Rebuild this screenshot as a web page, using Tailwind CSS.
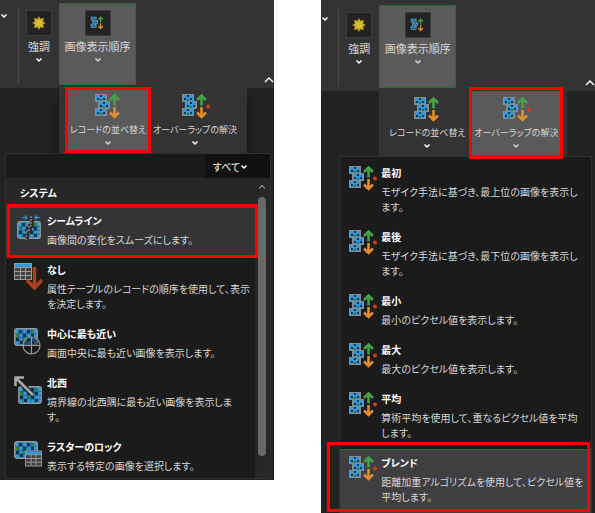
<!DOCTYPE html>
<html lang="ja">
<head>
  <meta charset="UTF-8" />
  <meta name="viewport" content="width=device-width, initial-scale=1" />
  <title>画像表示順序</title>
  <script src="https://cdn.jsdelivr.net/npm/@tailwindcss/browser@4"></script>
</head>
<body class="flex items-start justify-between bg-white font-['Noto_Sans_CJK_JP',sans-serif] text-[10px] text-[#d6d6d6] [font-feature-settings:'palt']">

  <!-- Shared icons -->
  <svg class="hidden">
    <symbol id="chevron" viewBox="0 0 8 6">
      <path d="M1.500 1.500 4 4 6.500 1.500" fill="none" stroke="currentColor" stroke-width="1.500" />
    </symbol>
    <symbol id="collapse" viewBox="0 0 10 8">
      <path d="M1 6 5 2 9 6" fill="none" stroke="currentColor" stroke-width="1.400" />
    </symbol>
    <symbol id="sun" viewBox="0 0 14 14">
      <path d="M7 0 8.300 2.700 11.900 2.100 11.300 5.700 14 7 11.300 8.300 11.900 11.900 8.300 11.300 7 14 5.700 11.300 2.100 11.900 2.700 8.300 0 7 2.700 5.700 2.100 2.100 5.700 2.700Z" fill="#c4a628" />
      <circle cx="7" cy="7" r="3.600" fill="#d6be34" />
    </symbol>
    <symbol id="tile" viewBox="0 0 12 8">
      <rect x=".5" y=".5" width="11" height="7" fill="#3298d8" stroke="#8c8c8c" />
      <path d="M2 4h2v2H2zM5 1h2v2H5zM8 4h2v2H8z" fill="#15324c" />
      <path d="M5 5h2v2H5z" fill="#2e7a35" />
    </symbol>
    <symbol id="order" viewBox="0 0 29 27">
      <use href="#tile" x="1" y="1" width="12" height="8" />
      <use href="#tile" x="4" y="8" width="12" height="8" />
      <use href="#tile" x="1" y="15" width="12" height="8" />
      <path d="M20.500 12.500V2.500M16 7 20.500 2.500 25 7" fill="none" stroke="#46a04a" stroke-width="2.600" />
      <path d="M20.500 14V24M16 19.500 20.500 24 25 19.500" fill="none" stroke="#e08c30" stroke-width="2.600" />
    </symbol>
    <symbol id="overlap" viewBox="0 0 29 27">
      <use href="#order" width="29" height="27" />
      <circle cx="27" cy="13.500" r="2" fill="#c8431c" />
    </symbol>
    <symbol id="raster" viewBox="0 0 24 18">
      <rect x=".7" y=".7" width="22.600" height="16.600" rx="2" fill="#3298d8" stroke="#999" stroke-width="1.200" />
      <path d="M5 2h3v3H5zM13 2h3v3h-3zM17 6h3v3h-3zM9 6h3v3H9zM2 10h3v3H2zM13 10h3v3h-3zM6 13h3v3H6zM17 13h3v3h-3z" fill="#12283c" />
      <path d="M2 6h3v3H2zM9 10h3v3H9zM17 2h3v3h-3z" fill="#32842f" />
      <path d="M5 1v16M9 1v16M13 1v16M17 1v16M1 5.500h22M1 9.500h22M1 13h22" stroke="#174565" stroke-width=".5" />
    </symbol>
    <symbol id="table" viewBox="0 0 18 17">
      <rect x=".5" y=".5" width="17" height="16" fill="#444" stroke="#999" />
      <rect x="1" y="1" width="16" height="3" fill="#3298d8" />
      <path d="M1 4.500h16M1 8.500h16M1 12.500h16M6.500 4v12M11.500 4v12" stroke="#999" />
    </symbol>
    <symbol id="seamline" viewBox="0 0 29 29">
      <use href="#raster" x="3" y="6" width="24" height="18" />
      <path d="M18 5v6h-2v5h-3v8" fill="none" stroke="#2f2f31" stroke-width="4" />
      <path d="M17 1v10h-2v5h-3v10" fill="none" stroke="#aaa" stroke-dasharray="2 1" />
      <path d="M8 2.500h5M11 .5l2 2-2 2M26 2.500h-5M23 .5l-2 2 2 2" fill="none" stroke="#3298d8" stroke-width="1.200" />
    </symbol>
    <symbol id="none" viewBox="0 0 29 29">
      <use href="#table" x="0" y="0" width="18" height="17" />
      <path d="M20.500 4V24M13 17 20.500 25 28 17" fill="none" stroke="#b0401c" stroke-width="3.400" />
    </symbol>
    <symbol id="center" viewBox="0 0 29 29">
      <use href="#raster" x="0" y="1" width="24" height="18" />
      <circle cx="17.500" cy="18.500" r="8.500" fill="#1b1b1b" fill-opacity=".55" stroke="#999" stroke-width="1.200" />
      <path d="M17.500 10v17M9 18.500h17" stroke="#999" stroke-width="1.200" />
    </symbol>
    <symbol id="northwest" viewBox="0 0 29 29">
      <use href="#raster" x="4" y="10" width="24" height="18" />
      <path d="M1.500 1.500 19 19" stroke="#1b1b1b" stroke-width="5" />
      <path d="M2 2 19 19M1.500 10V1.500H10" fill="none" stroke="#a8a8a8" stroke-width="2.600" />
    </symbol>
    <symbol id="lock" viewBox="0 0 29 29">
      <use href="#raster" x="0" y="1" width="24" height="18" />
      <use href="#table" x="11" y="10" width="17" height="17" />
    </symbol>
  </svg>

  <!-- Sort records -->
  <section class="w-[46%] bg-[#222] pb-px">
    <div class="relative flex h-[88px] items-start bg-[#333] pt-[3px]">
      <button aria-label="その他" class="mt-[10px] w-2 text-white"><svg class="h-[6px] w-2"><use href="#chevron" /></svg></button>
      <span class="mt-1 ml-[10px] h-[76px] w-px bg-[#4a4a4a]"></span>
      <button class="flex w-10 flex-col items-center pt-[7px]">
        <span class="flex size-[26px] items-center justify-center border border-[#3c3c3c] bg-[#222]"><svg class="size-[14px]"><use href="#sun" /></svg></span>
        <span class="text-[11px] leading-5">強調</span>
        <svg class="mt-px h-[6px] w-2 text-white"><use href="#chevron" /></svg>
      </button>
      <button class="flex h-[82px] w-[77px] flex-col items-center border border-[#2c6b38] bg-[#5a5a5a] pt-[6px]">
        <span class="flex size-[26px] items-center justify-center border border-[#3c3c3c] bg-[#222]"><svg class="h-[14px] w-[15px]"><use href="#order" /></svg></span>
        <span class="text-[11px] leading-5 whitespace-nowrap">画像表示順序</span>
        <svg class="mt-px h-[6px] w-2"><use href="#chevron" /></svg>
      </button>
      <button aria-label="折りたたむ" class="absolute right-0 bottom-1 text-white"><svg class="h-2 w-[10px]"><use href="#collapse" /></svg></button>
    </div>

    <div class="ml-[59px] flex h-[65px] w-[188px] bg-[#333] pl-[6px] text-[9px] shadow-lg shadow-black/50">
      <button class="relative flex w-[86px] flex-col items-center bg-[#5a5a5a] pt-[5px]">
        <svg class="h-[27px] w-[29px]"><use href="#order" /></svg>
        <span class="leading-5 whitespace-nowrap">レコードの並べ替え</span>
        <svg class="h-[6px] w-2"><use href="#chevron" /></svg>
        <span class="absolute inset-x-0 -top-px bottom-0 border-3 border-[#f00]"></span>
      </button>
      <button class="flex w-[88px] flex-col items-center pt-[5px]">
        <svg class="h-[27px] w-[29px]"><use href="#overlap" /></svg>
        <span class="leading-5 whitespace-nowrap">オーバーラップの解決</span>
        <svg class="h-[6px] w-2 text-white"><use href="#chevron" /></svg>
      </button>
    </div>

    <div class="relative mr-[3px] ml-[5px] border border-[#303030] bg-[#1b1b1b]">
      <div class="flex h-6">
        <input type="text" aria-label="検索" class="min-w-0 flex-1 bg-[#1a1a1a] outline-none" />
        <div class="relative w-[65px] bg-[#111]">
          <select aria-label="フィルター" class="h-6 w-full appearance-none pl-2 text-white outline-none"><option>すべて</option></select>
          <svg class="pointer-events-none absolute top-[10px] left-[35px] h-[6px] w-2 text-white"><use href="#chevron" /></svg>
        </div>
      </div>
      <div class="flex">
        <div class="min-w-0 flex-1">
          <h2 class="bg-[#272727] pt-px pl-[14px] font-bold leading-7 text-white">システム</h2>
          <ul>
            <li class="relative border-y border-[#2f5a3e] bg-[#343436]">
              <button class="flex w-full items-start gap-1 pt-1 pb-2 pl-2 text-left">
                <svg class="mt-[3px] size-[29px] shrink-0"><use href="#seamline" /></svg>
                <span><b class="mb-[2px] block leading-[18px] text-white">シームライン</b><span class="block leading-[15px]">画像間の変化をスムーズにします。</span></span>
              </button>
              <span class="absolute -top-1 -right-[3px] -bottom-[3px] left-px border-3 border-[#f00]"></span>
            </li>
            <li>
              <button class="flex w-full items-start gap-1 pt-[5px] pb-[9px] pl-2 text-left">
                <svg class="mt-[2px] size-[29px] shrink-0"><use href="#none" /></svg>
                <span><b class="mb-[2px] block leading-[18px] text-white">なし</b><span class="block leading-[15px] whitespace-nowrap">属性テーブルのレコードの順序を使用して、表示<br />を決定します。</span></span>
              </button>
            </li>
            <li>
              <button class="flex w-full items-start gap-1 pt-[5px] pb-[9px] pl-2 text-left">
                <svg class="mt-[2px] size-[29px] shrink-0"><use href="#center" /></svg>
                <span><b class="mb-[2px] block leading-[18px] text-white">中心に最も近い</b><span class="block leading-[15px]">画面中央に最も近い画像を表示します。</span></span>
              </button>
            </li>
            <li>
              <button class="flex w-full items-start gap-1 pt-[5px] pb-[9px] pl-2 text-left">
                <svg class="mt-[2px] size-[29px] shrink-0"><use href="#northwest" /></svg>
                <span><b class="mb-[2px] block leading-[18px] text-white">北西</b><span class="block leading-[15px] whitespace-nowrap">境界線の北西隅に最も近い画像を表示しま<br />す。</span></span>
              </button>
            </li>
            <li>
              <button class="flex w-full items-start gap-1 pt-[5px] pb-[5px] pl-2 text-left">
                <svg class="mt-[2px] size-[29px] shrink-0"><use href="#lock" /></svg>
                <span><b class="mb-[2px] block leading-[18px] text-white">ラスターのロック</b><span class="block leading-[15px]">表示する特定の画像を選択します。</span></span>
              </button>
            </li>
          </ul>
        </div>
        <!-- Scroll bar -->
        <div class="flex w-[15px] flex-col items-center bg-[#272727] pt-[6px] pb-[22px]">
          <svg class="h-[6px] w-2 text-[#aaa]"><use href="#collapse" /></svg>
          <span class="mt-[7px] w-2 flex-1 rounded-full bg-[#686868]"></span>
        </div>
      </div>
    </div>
  </section>

  <!-- Resolve overlap -->
  <section class="w-[46%] bg-[#222]">
    <div class="relative flex h-[91px] items-start bg-[#333] pt-[5px]">
      <button aria-label="その他" class="mt-[11px] w-2 text-white"><svg class="h-[6px] w-2"><use href="#chevron" /></svg></button>
      <span class="mt-1 ml-[9px] h-[77px] w-px bg-[#4a4a4a]"></span>
      <button class="flex w-10 flex-col items-center pt-[7px]">
        <span class="flex size-[26px] items-center justify-center border border-[#3c3c3c] bg-[#222]"><svg class="size-[14px]"><use href="#sun" /></svg></span>
        <span class="text-[11px] leading-5">強調</span>
        <svg class="mt-px h-[6px] w-2 text-white"><use href="#chevron" /></svg>
      </button>
      <button class="flex h-[83px] w-[77px] flex-col items-center border border-[#2c6b38] bg-[#5a5a5a] pt-[6px]">
        <span class="flex size-[26px] items-center justify-center border border-[#3c3c3c] bg-[#222]"><svg class="h-[14px] w-[15px]"><use href="#order" /></svg></span>
        <span class="text-[11px] leading-5 whitespace-nowrap">画像表示順序</span>
        <svg class="mt-px h-[6px] w-2"><use href="#chevron" /></svg>
      </button>
      <button aria-label="折りたたむ" class="absolute right-0 bottom-1 text-white"><svg class="h-2 w-[10px]"><use href="#collapse" /></svg></button>
    </div>

    <div class="relative z-10 ml-[58px] flex h-[65px] w-[188px] bg-[#333] pl-[6px] text-[9px]">
      <button class="flex w-[84px] flex-col items-center pt-[5px]">
        <svg class="h-[27px] w-[29px]"><use href="#order" /></svg>
        <span class="leading-5 whitespace-nowrap">レコードの並べ替え</span>
        <svg class="h-[6px] w-2 text-white"><use href="#chevron" /></svg>
      </button>
      <button class="relative flex w-[94px] flex-col items-center border-y border-[#2c6b38] bg-[#5a5a5a] pt-1">
        <svg class="h-[27px] w-[29px]"><use href="#overlap" /></svg>
        <span class="leading-5 whitespace-nowrap">オーバーラップの解決</span>
        <svg class="h-[6px] w-2"><use href="#chevron" /></svg>
        <span class="absolute inset-x-0 -top-[5px] -bottom-1 border-3 border-[#f00]"></span>
      </button>
    </div>

    <ul class="mr-[3px] ml-[18px] border border-b-0 border-[#303030] bg-[#1b1b1b] pt-[2px]">
      <li>
        <button class="flex w-full items-start gap-1 pt-[5px] pb-[9px] pl-2 text-left">
          <svg class="mt-px h-[27px] w-[29px] shrink-0"><use href="#overlap" /></svg>
          <span><b class="mb-[2px] block leading-[18px] text-white">最初</b><span class="block leading-[15px]">モザイク手法に基づき、最上位の画像を表示し<br />ます。</span></span>
        </button>
      </li>
      <li>
        <button class="flex w-full items-start gap-1 pt-[5px] pb-[9px] pl-2 text-left">
          <svg class="mt-px h-[27px] w-[29px] shrink-0"><use href="#overlap" /></svg>
          <span><b class="mb-[2px] block leading-[18px] text-white">最後</b><span class="block leading-[15px]">モザイク手法に基づき、最下位の画像を表示し<br />ます。</span></span>
        </button>
      </li>
      <li>
        <button class="flex w-full items-start gap-1 pt-[5px] pb-[9px] pl-2 text-left">
          <svg class="mt-px h-[27px] w-[29px] shrink-0"><use href="#overlap" /></svg>
          <span><b class="mb-[2px] block leading-[18px] text-white">最小</b><span class="block leading-[15px]">最小のピクセル値を表示します。</span></span>
        </button>
      </li>
      <li>
        <button class="flex w-full items-start gap-1 pt-[5px] pb-[9px] pl-2 text-left">
          <svg class="mt-px h-[27px] w-[29px] shrink-0"><use href="#overlap" /></svg>
          <span><b class="mb-[2px] block leading-[18px] text-white">最大</b><span class="block leading-[15px]">最大のピクセル値を表示します。</span></span>
        </button>
      </li>
      <li>
        <button class="flex w-full items-start gap-1 pt-[5px] pb-[9px] pl-2 text-left">
          <svg class="mt-px h-[27px] w-[29px] shrink-0"><use href="#overlap" /></svg>
          <span><b class="mb-[2px] block leading-[18px] text-white">平均</b><span class="block leading-[15px]">算術平均を使用して、重なるピクセル値を平均<br />します。</span></span>
        </button>
      </li>
      <li class="relative border-t border-[#2c6b38] bg-[#3f3f41]">
        <button class="flex w-full items-start gap-1 pt-1 pb-[9px] pl-2 text-left">
          <svg class="mt-px h-[27px] w-[29px] shrink-0"><use href="#overlap" /></svg>
          <span><b class="mb-[2px] block leading-[18px] text-white">ブレンド</b><span class="block leading-[15px]">距離加重アルゴリズムを使用して、ピクセル値を<br />平均します。</span></span>
        </button>
        <span class="absolute -top-2 right-px bottom-px -left-[13px] border-3 border-[#f00]"></span>
      </li>
    </ul>
  </section>

</body>
</html>
